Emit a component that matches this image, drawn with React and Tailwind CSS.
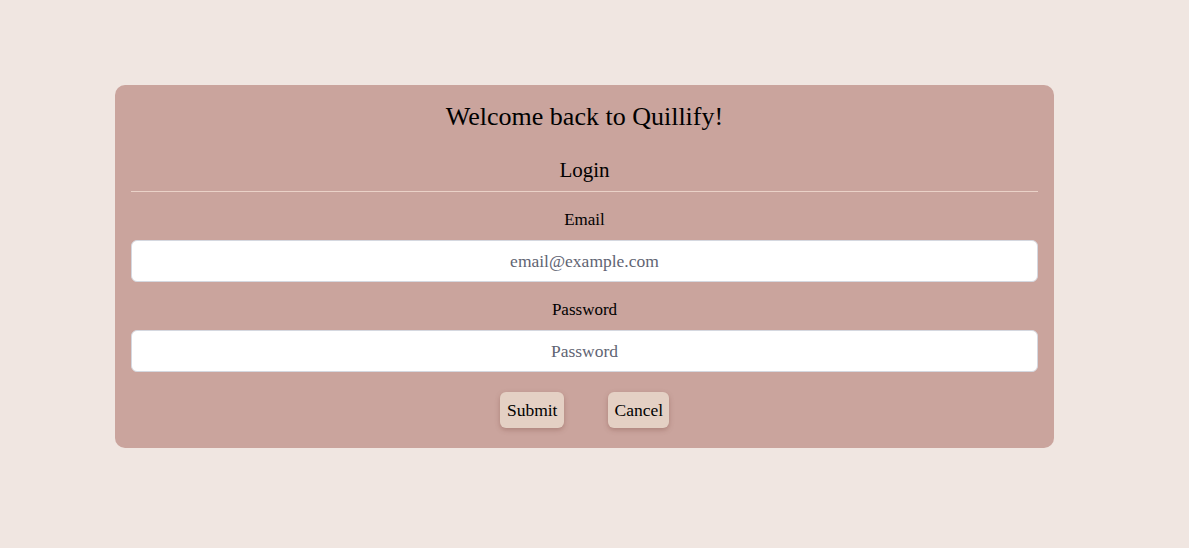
export default function App() {
  return (
    <div className="min-h-[548px] w-full bg-[#f0e6e1] pt-[85px]" style={{ fontFamily: '"Liberation Serif", "DejaVu Serif", serif' }}>
      <div className="ml-[115px] w-[939px] rounded-[10px] bg-[#caa49d] px-4 pb-[20px] pt-[16px] text-black">
        <h1 className="text-center text-[26px] leading-[32px]">Welcome back to Quillify!</h1>
        <h2 className="mt-[24px] text-center text-[21px] leading-[26px]">Login</h2>
        <div className="mt-[8px] h-px bg-[#ead2c8]" />
        <form className="flex flex-col items-center">
          <label className="mt-[18px] text-[17px] leading-[20px]">Email</label>
          <input
            type="email"
            placeholder="email@example.com"
            className="mt-[10px] h-[42px] w-full rounded-[6px] border border-[#d5d8e0] bg-white text-center text-[17.5px] placeholder:text-[#5f6473] outline-none"
          />
          <label className="mt-[18px] text-[17px] leading-[20px]">Password</label>
          <input
            type="password"
            placeholder="Password"
            className="mt-[10px] h-[42px] w-full rounded-[6px] border border-[#d5d8e0] bg-white text-center text-[17.5px] placeholder:text-[#5f6473] outline-none"
          />
          <div className="mt-[20px] flex gap-[44px]">
            <button type="button" className="h-[36px] rounded-[6px] bg-[#e4d0c4] px-[7px] text-[17.5px] shadow-[0_2px_5px_rgba(120,70,60,0.35)]">
              Submit
            </button>
            <button type="button" className="h-[36px] rounded-[6px] bg-[#e4d0c4] px-[6px] text-[17.5px] shadow-[0_2px_5px_rgba(120,70,60,0.35)]">
              Cancel
            </button>
          </div>
        </form>
      </div>
    </div>
  );
}
